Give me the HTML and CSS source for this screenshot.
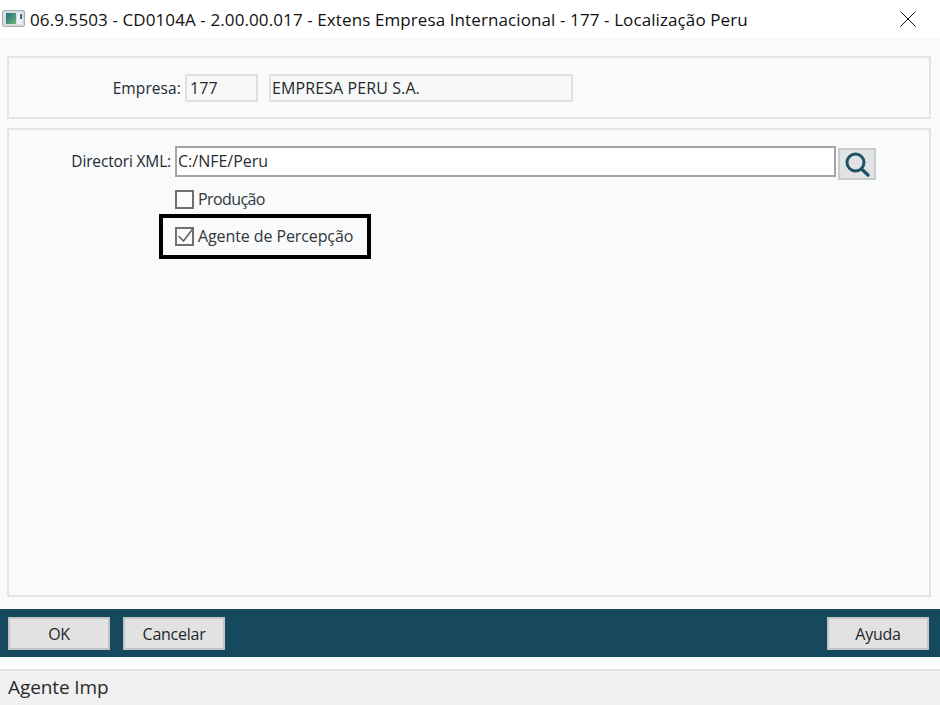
FILE: index.html
```html
<!DOCTYPE html>
<html lang="pt">
<head>
<meta charset="utf-8">
<title>Extens Empresa Internacional</title>
<link rel="stylesheet" href="styles.css">
</head>
<body>
<div class="window">
  <header class="titlebar">
    <svg class="app-icon" width="24" height="18" viewBox="0 0 24 18">
      <defs><linearGradient id="g" x1="0" y1="0" x2="1" y2="1"><stop offset="0" stop-color="#1f6f80"/><stop offset="1" stop-color="#6fb37a"/></linearGradient></defs>
      <rect x="0.5" y="0.5" width="22" height="16" rx="1.5" fill="#d9dde2" stroke="#a9aeb4"/>
      <rect x="4" y="3" width="10" height="11" fill="url(#g)"/>
      <rect x="15" y="3" width="5" height="11" fill="#f3f5f5"/>
      <rect x="18" y="4" width="2" height="5" fill="#2d6f80"/>
    </svg>
    <span class="title">06.9.5503 - CD0104A - 2.00.00.017 - Extens Empresa Internacional - 177 - Localização Peru</span>
    <svg class="close" width="16" height="16" viewBox="0 0 16 16"><path d="M0.5 0.5 15.5 15.5M15.5 0.5 0.5 15.5" stroke="#111" stroke-width="1" fill="none"/></svg>
  </header>
  <main class="content">
    <section class="panel panel-top">
      <span class="label label-empresa">Empresa:</span>
      <span class="readonly ro-code">177</span>
      <span class="readonly ro-name">EMPRESA PERU S.A.</span>
    </section>
    <section class="panel panel-main">
      <div class="row-dir">
        <span class="label label-dir">Directori XML:</span>
        <span class="input">C:/NFE/Peru</span>
        <button class="search" type="button" aria-label="Buscar">
          <svg width="28" height="28" viewBox="0 0 28 28"><circle cx="12.5" cy="12.5" r="8.5" fill="none" stroke="#1f5267" stroke-width="3"/><path d="M18.5 19 25 25" stroke="#1f5267" stroke-width="3.4" stroke-linecap="round"/></svg>
        </button>
      </div>
      <div class="check-row check-plain">
        <span class="box"></span><span class="check-text check-text-short">Produção</span>
      </div>
      <div class="highlight">
        <div class="check-row">
          <span class="box"><svg class="tick" width="16" height="16" viewBox="0 0 16 16"><path d="M1.5 8 6.5 13 16 0.5" fill="none" stroke="#666" stroke-width="1.6"/></svg></span>
          <span class="check-text">Agente de Percepção</span>
        </div>
      </div>
    </section>
  </main>
  <div class="actions">
    <button class="btn" type="button">OK</button>
    <button class="btn" type="button">Cancelar</button>
    <button class="btn btn-help" type="button">Ayuda</button>
  </div>
  <footer class="status">Agente Imp</footer>
</div>
</body>
</html>
```
FILE: styles.css
```css
* { box-sizing: border-box; }
html, body { margin: 0; padding: 0; }
body { width: 940px; height: 705px; overflow: hidden; font-family: "Open Sans", "Noto Sans", sans-serif; color: #26292e; background: #f9fafb; }
.window { display: flex; flex-direction: column; height: 705px; }
.titlebar { height: 38px; flex: none; background: #fff; display: flex; align-items: center; padding: 0 24px 0 2px; color: #111; }
.app-icon { flex: none; margin-right: 4px; }
.title { flex: 1; font-size: 17px; white-space: nowrap; letter-spacing: 0.1px; }
.close { flex: none; }
.content { flex: none; height: 571px; padding: 18px 9px 0 7px; display: flex; flex-direction: column; gap: 9px; }
.panel { border: 2px solid #e2e3e4; background: #f9fafb; }
.panel-top { height: 63px; display: flex; align-items: flex-start; padding-top: 16px; }
.panel-main { height: 469px; padding-top: 16px; }
.label { font-size: 15.5px; letter-spacing: -0.15px; text-align: right; white-space: nowrap; line-height: 28px; }
.label-empresa { width: 176px; padding-right: 4px; letter-spacing: 0.1px; }
.readonly { height: 28px; border: 2px solid #dfe0e1; background: #f7f8f8; font-size: 16px; letter-spacing: 0.1px; line-height: 24px; padding-left: 1px; white-space: nowrap; }
.ro-code { width: 73px; margin-right: 11px; padding-left: 3px; }
.ro-name { width: 304px; }
.row-dir { display: flex; align-items: flex-start; }
.label-dir { width: 166px; padding-right: 4px; line-height: 30px; }
.input { width: 661px; height: 31px; border: 2px solid #a5a5a5; background: #fff; font-size: 16px; line-height: 26px; padding-left: 1px; color: #2a2c30; }
.search { width: 38px; height: 32px; margin: 2px 0 0 2px; padding: 0; border: 2px solid #c9cbcc; background: #e2e3e4; display: flex; align-items: center; justify-content: center; }
.check-row { display: flex; align-items: center; height: 20px; }
.check-plain { margin: 9px 0 0 166px; }
.box { width: 19px; height: 19px; border: 2px solid #707070; background: #fbfbfb; display: flex; align-items: center; justify-content: center; flex: none; }
.tick { overflow: visible; }
.check-text { font-size: 16px; letter-spacing: -0.1px; margin-left: 4px; white-space: nowrap; color: #33363a; }
.check-text-short { letter-spacing: -0.6px; }
.highlight { width: 212px; height: 45px; margin: 5px 0 0 150px; border: 4px solid #000; padding: 8px 0 0 12px; }
.actions { height: 48px; flex: none; background: #17495e; display: flex; align-items: center; gap: 13px; padding: 0 11px 0 8px; border-top: 1px solid #1a4a5e; }
.btn { width: 102px; height: 33px; border: 2px solid #c2c4c5; background: #e2e2e2; font: 16px "Open Sans", "Noto Sans", sans-serif; letter-spacing: -0.25px; color: #24272c; padding: 0; }
.btn-help { margin-left: auto; }
.status { margin-top: 12px; flex: 1; background: #f0f0f0; border-top: 2px solid #e3e3e3; font-size: 19px; letter-spacing: -0.1px; line-height: 26px; color: #2a2a2a; padding: 3px 0 0 8px; box-shadow: 0 -12px 0 #fbfcfc; }
```
